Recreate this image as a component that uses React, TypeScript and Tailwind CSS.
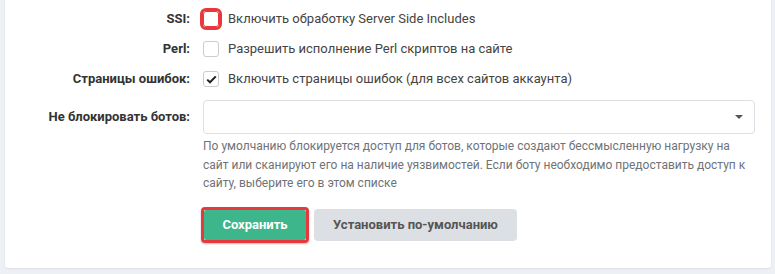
import React from "react";

const Label: React.FC<{ children: React.ReactNode }> = ({ children }) => (
  <div className="w-[185px] shrink-0 text-right text-[13px] font-bold text-[#333]">{children}</div>
);

const Check: React.FC<{ checked?: boolean; marked?: boolean }> = ({ checked, marked }) => (
  <span
    className={`flex h-[16px] w-[16px] shrink-0 items-center justify-center rounded-[3px] border bg-white ${
      marked ? "border-[#e8383d] outline-[3px] outline-solid outline-[#e8383d]" : "border-[#c9ccd0]"
    }`}
  >
    {checked && (
      <svg width="11" height="9" viewBox="0 0 11 9">
        <path d="M1.2 4.6 L4 7.3 L9.8 1.4" fill="none" stroke="#222" strokeWidth="2" />
      </svg>
    )}
  </span>
);

const CheckRow: React.FC<{ label: string; text: string; checked?: boolean; marked?: boolean }> = ({
  label,
  text,
  checked,
  marked,
}) => (
  <div className="flex h-[30px] items-center gap-[13px]">
    <Label>{label}</Label>
    <div className="flex items-center gap-[9px]">
      <Check checked={checked} marked={marked} />
      <span className="text-[13px] text-[#444]">{text}</span>
    </div>
  </div>
);

export default function App() {
  return (
    <div className="h-[274px] w-[775px] overflow-hidden bg-[#edf0f4] pl-[5px] pr-[4px] font-['Roboto',sans-serif]">
      <div className="h-[268px] rounded-b-[3px] bg-white pt-[4px] shadow-[0_1px_2px_rgba(0,0,0,0.08)]">
        <CheckRow label="SSI:" text="Включить обработку Server Side Includes" marked />
        <CheckRow label="Perl:" text="Разрешить исполнение Perl скриптов на сайте" />
        <CheckRow label="Страницы ошибок:" text="Включить страницы ошибок (для всех сайтов аккаунта)" checked />

        <div className="mt-[6px] flex items-start gap-[13px]">
          <div className="flex h-[34px] items-center">
            <Label>Не блокировать ботов:</Label>
          </div>
          <div className="w-[552px]">
            <div className="flex h-[34px] items-center justify-end rounded-[4px] border border-[#dcdfe3] bg-white pr-[11px]">
              <svg width="8" height="4" viewBox="0 0 8 4">
                <path d="M0 0 H8 L4 4 Z" fill="#555" />
              </svg>
            </div>
            <p className="mt-[3px] pr-[8px] text-[12px] leading-[18.5px] text-[#6f7378]">
              По умолчанию блокируется доступ для ботов, которые создают бессмысленную нагрузку на сайт или сканируют
              его на наличие уязвимостей. Если боту необходимо предоставить доступ к сайту, выберите его в этом списке
            </p>
          </div>
        </div>

        <div className="mt-[14px] flex items-center gap-[5px] pl-[196px]">
          <div className="rounded-[4px] border-[3px] border-[#e8383d] shadow-[0_1px_2px_rgba(0,0,0,0.25)]">
            <button className="h-[30px] w-[102px] rounded-[2px] bg-[#3db68c] text-[13px] font-bold text-white">
              Сохранить
            </button>
          </div>
          <button className="h-[32px] w-[203px] rounded-[4px] bg-[#dcdfe3] text-[13px] font-bold text-[#555]">
            Установить по-умолчанию
          </button>
        </div>
      </div>
    </div>
  );
}
